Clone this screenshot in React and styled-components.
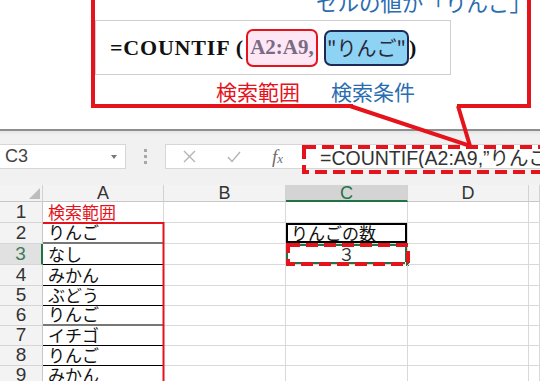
import React from 'react';
import styled, { createGlobalStyle } from 'styled-components';

const RED = '#e5131b';
const BLUE = '#2a6cb0';
const GREEN = '#217346';
const JP = '"Noto Sans CJK JP", "Liberation Sans", sans-serif';
const SANS = '"Liberation Sans", "Noto Sans CJK JP", sans-serif';
const SERIF = '"Liberation Serif", "Noto Sans CJK JP", serif';

const Global = createGlobalStyle`
  html, body { margin: 0; padding: 0; background: #fff; }
  body { width: 540px; height: 381px; overflow: hidden; }
  * { box-sizing: border-box; }
`;

const Page = styled.div`
  position: relative;
  width: 540px;
  height: 381px;
  overflow: hidden;
  font-family: ${SANS};
`;

/* ---------- callout ---------- */
const TopArea = styled.div`
  height: 129px;
  display: flex;
  flex-direction: column;
  align-items: flex-start;
  background: #fff;
`;

const Callout = styled.div`
  margin-top: -10px;
  margin-left: 91px;
  width: 440px;
  border: 4px solid ${RED};
  border-top: none;
  background: #fff;
  display: flex;
  flex-direction: column;
`;

const CalloutHeading = styled.div`
  height: 24px;
  line-height: 24px;
  font-family: ${JP};
  font-size: 21.5px;
  color: ${BLUE};
  text-align: right;
  margin-right: -4px;
  white-space: nowrap;
`;

const FormulaCard = styled.div`
  margin-top: 6px;
  width: 356px;
  height: 55px;
  border: 1px solid #cfcfcf;
  background: #fff;
  display: flex;
  align-items: center;
  padding-left: 14px;
`;

const FnText = styled.span`
  font-family: ${SERIF};
  font-weight: bold;
  font-size: 22px;
  color: #111;
  letter-spacing: ${p => p.$spacing || 0}px;
  white-space: pre;
`;

const Chip = styled.span`
  display: inline-flex;
  align-items: center;
  justify-content: center;
  height: ${p => p.$h}px;
  width: ${p => p.$w}px;
  margin-left: ${p => p.$ml}px;
  border: 2px solid ${p => p.$border};
  border-radius: 7px;
  background: ${p => p.$bg};
  color: ${p => p.$color};
  font-family: ${p => p.$font};
  font-weight: ${p => p.$weight || 'normal'};
  font-size: ${p => p.$size}px;
  white-space: nowrap;
`;

const LabelRow = styled.div`
  margin-top: 5px;
  height: 22px;
  padding-left: 121px;
  display: flex;
  gap: 31px;
  padding-bottom: 2px;
  box-sizing: content-box;
`;

const Label = styled.span`
  font-family: ${JP};
  font-size: 21px;
  line-height: 22px;
  color: ${p => p.$color};
`;

/* ---------- excel toolbar ---------- */
const Divider = styled.div`
  height: 2px;
  background: #8e8e8e;
`;

const Toolbar = styled.div`
  height: 54px;
  background: linear-gradient(#e4e4e4, #f1f1f1 4px, #f1f1f1);
  display: flex;
  align-items: flex-start;
  padding-top: 13px;
`;

const NameBox = styled.div`
  width: 126px;
  height: 25px;
  background: #fff;
  border: 1px solid #d6d6d6;
  border-left: none;
  display: flex;
  align-items: center;
  justify-content: space-between;
  padding: 0 8px 0 5px;
  font-family: ${SANS};
  font-size: 18px;
  color: #444;
`;

const DropArrow = styled.span`
  width: 0;
  height: 0;
  border-left: 3.5px solid transparent;
  border-right: 3.5px solid transparent;
  border-top: 4px solid #777;
`;

const GripArea = styled.div`
  width: 39px;
  height: 25px;
  display: flex;
  align-items: center;
  justify-content: center;
`;

const Grip = styled.span`
  width: 3px;
  height: 15px;
  background: repeating-linear-gradient(#a8a8a8 0 3px, transparent 3px 6px);
`;

const FormulaInput = styled.div`
  flex: 1;
  height: 25px;
  background: #fff;
  border: 1px solid #d6d6d6;
  border-right: none;
  display: flex;
  align-items: center;
  padding-left: 1px;
  white-space: nowrap;
  overflow: hidden;
`;

const IconSlot = styled.span`
  width: ${p => p.$w}px;
  flex: none;
  display: flex;
  align-items: center;
  justify-content: center;
  color: #777;
`;

const Fx = styled.span`
  font-family: ${SERIF};
  font-style: italic;
  font-size: 19px;
  color: #6f6f6f;
  small { font-size: 13px; }
`;

const FormulaText = styled.span`
  padding-left: 20px;
  font-family: ${SANS};
  font-size: 19.5px;
  color: #333;
  white-space: nowrap;
`;

/* ---------- grid ---------- */
const Sheet = styled.div`
  display: grid;
  grid-template-columns: 43px 121px 122px 122px 121px 1fr;
  grid-template-rows: 17px 21px 21px 21px 21px 20px 20px 20px 20px 20px;
  background: #fff;
`;

const Corner = styled.div`
  background: #f3f3f3;
  border-right: 1px solid #d2d2d2;
  border-bottom: 1px solid #c8c8c8;
  display: flex;
  align-items: flex-end;
  justify-content: flex-end;
  padding: 0 2px 2px 0;
`;

const ColHead = styled.div`
  background: ${p => (p.$active ? '#d4d4d4' : '#f3f3f3')};
  border-right: 1px solid #d2d2d2;
  border-bottom: ${p => (p.$active ? `2px solid ${GREEN}` : '1px solid #c8c8c8')};
  color: ${p => (p.$active ? GREEN : '#333')};
  font-family: ${SANS};
  font-size: 18px;
  line-height: 20px;
  display: flex;
  justify-content: center;
  align-items: center;
  overflow: hidden;
`;

const RowHead = styled.div`
  background: ${p => (p.$active ? '#e1e1e1' : '#f3f3f3')};
  border-right: ${p => (p.$active ? `2px solid ${GREEN}` : '1px solid #c8c8c8')};
  border-bottom: 1px solid #d6d6d6;
  color: ${p => (p.$active ? '#3f7a5c' : '#333')};
  font-family: ${SANS};
  font-size: 19px;
  display: flex;
  justify-content: center;
  align-items: flex-end;
  line-height: 20px;
  overflow: hidden;
`;

const Cell = styled.div`
  position: relative;
  border-right: 1px solid #d9d9d9;
  border-bottom: 1px solid ${p => p.$line || '#d9d9d9'};
  ${p => p.$line === '#777' ? 'border-bottom-width: 2px;' : ''}
  box-shadow: ${p => p.$box ? `inset 0 0 0 2px ${p.$box}` : 'none'};
  color: ${p => p.$color || '#111'};
  font-family: ${JP};
  font-size: 17px;
  line-height: 20px;
  display: flex;
  align-items: flex-end;
  justify-content: ${p => (p.$center ? 'center' : 'flex-start')};
  padding-left: ${p => (p.$center ? 0 : 5)}px;
  white-space: nowrap;
  overflow: visible;
`;

const Handle = styled.span`
  position: absolute;
  right: -3px;
  bottom: -3px;
  width: 5px;
  height: 5px;
  background: ${GREEN};
  border: 1px solid #fff;
`;

const Overlay = styled.svg`
  position: absolute;
  left: 0;
  top: 0;
  width: 540px;
  height: 381px;
  pointer-events: none;
`;

const aCol = [
  { v: 'りんご', line: '#777' },
  { v: 'なし', line: '#000' },
  { v: 'みかん', line: '#000' },
  { v: 'ぶどう', line: '#000' },
  { v: 'りんご', line: '#777' },
  { v: 'イチゴ', line: '#000' },
  { v: 'りんご', line: '#000' },
  { v: 'みかん', line: '#000' },
];

export default function App() {
  const rows = [];
  for (let r = 1; r <= 9; r++) {
    const active = r === 3;
    rows.push(<RowHead key={`h${r}`} $active={active}>{r}</RowHead>);
    if (r === 1) {
      rows.push(<Cell key={`a${r}`} $color={RED} $line="#000">検索範囲</Cell>);
    } else {
      const a = aCol[r - 2];
      rows.push(<Cell key={`a${r}`} $line={a.line}>{a.v}</Cell>);
    }
    rows.push(<Cell key={`b${r}`} />);
    if (r === 2) {
      rows.push(<Cell key={`c${r}`} $box="#000">りんごの数</Cell>);
    } else if (r === 3) {
      rows.push(
        <Cell key={`c${r}`} $box={GREEN} $center $color="#333">
          ３
          <Handle />
        </Cell>
      );
    } else {
      rows.push(<Cell key={`c${r}`} />);
    }
    rows.push(<Cell key={`d${r}`} />);
    rows.push(<Cell key={`e${r}`} />);
  }

  return (
    <Page>
      <Global />
      <TopArea>
        <Callout>
          <CalloutHeading>セルの値が「りんご」</CalloutHeading>
          <FormulaCard>
            <FnText $spacing={0.8}>=COUNTIF (</FnText>
            <Chip $h={38} $w={72} $ml={2} $border={RED} $bg="#fde7f4" $color="#7a6a84" $font={SERIF} $weight="bold" $size={21}>
              A2:A9,
            </Chip>
            <Chip $h={36} $w={85} $ml={6} $border="#1c2a55" $bg="#8ed3f4" $color="#2a2a3a" $font={JP} $size={20}>
              "りんご"
            </Chip>
            <FnText>)</FnText>
          </FormulaCard>
          <LabelRow>
            <Label $color={RED}>検索範囲</Label>
            <Label $color={BLUE}>検索条件</Label>
          </LabelRow>
        </Callout>
      </TopArea>
      <Divider />
      <Toolbar>
        <NameBox>
          C3
          <DropArrow />
        </NameBox>
        <GripArea>
          <Grip />
        </GripArea>
        <FormulaInput>
          <IconSlot $w={45}>
            <svg width="13" height="13" viewBox="0 0 13 13">
              <path d="M1 1 L12 12 M12 1 L1 12" stroke="#b4b4b4" strokeWidth="1.4" fill="none" />
            </svg>
          </IconSlot>
          <IconSlot $w={43}>
            <svg width="14" height="12" viewBox="0 0 14 12">
              <path d="M1 6 L5 10.5 L13 1" stroke="#b4b4b4" strokeWidth="1.4" fill="none" />
            </svg>
          </IconSlot>
          <IconSlot $w={45}>
            <Fx>f<small>x</small></Fx>
          </IconSlot>
          <FormulaText>=COUNTIF(A2:A9,”りんご”)</FormulaText>
        </FormulaInput>
      </Toolbar>
      <Sheet>
        <Corner>
          <svg width="11" height="11" viewBox="0 0 11 11">
            <path d="M11 0 L11 11 L0 11 Z" fill="#bdbdbd" />
          </svg>
        </Corner>
        <ColHead>A</ColHead>
        <ColHead>B</ColHead>
        <ColHead $active>C</ColHead>
        <ColHead>D</ColHead>
        <ColHead />
        {rows}
      </Sheet>
      <Overlay viewBox="0 0 540 381">
        {/* callout tail */}
        <path d="M353 106 L457 106" stroke="#fff" strokeWidth="5" />
        <path d="M350 106 L470 146 L458 106" stroke={RED} strokeWidth="4" fill="none" strokeLinejoin="miter" />
        {/* range outline A2:A9 */}
        <path d="M43 223 L163.5 223 L163.5 381" stroke={RED} strokeWidth="2" fill="none" />
        {/* dashed highlight formula */}
        <rect x="304" y="147" width="260" height="25" stroke={RED} strokeWidth="4" fill="none" strokeDasharray="12 6" />
        {/* dashed highlight C3 */}
        <rect x="288" y="245" width="120" height="19" stroke={RED} strokeWidth="4" fill="none" strokeDasharray="12 6" />
      </Overlay>
    </Page>
  );
}
